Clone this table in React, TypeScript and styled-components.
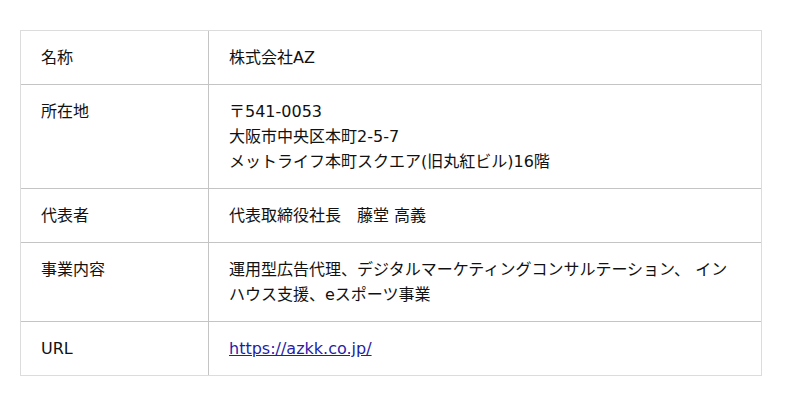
import React from "react";
import styled, { createGlobalStyle } from "styled-components";

const Global = createGlobalStyle`
  html, body { margin: 0; padding: 0; background: #fff; }
  body {
    font-family: "DejaVu Sans", "Noto Sans CJK JP", sans-serif;
    color: #111;
  }
`;

const Page = styled.div`
  padding: 30px 0 0 20px;
`;

const Table = styled.div`
  width: 742px;
  box-sizing: border-box;
  border: 1px solid #dcdcdc;
  display: flex;
  flex-direction: column;
`;

const Row = styled.div`
  display: grid;
  grid-template-columns: 188px 1fr;
  & + & {
    border-top: 1px solid #c4c4c4;
  }
`;

const Label = styled.div`
  padding: 14px 20px;
  font-size: 16px;
  line-height: 25px;
  border-right: 1px solid #c4c4c4;
`;

const Value = styled.div`
  padding: 14px 20px;
  font-size: 16px;
  line-height: 25px;
`;

const Link = styled.a`
  color: #1f1ea6;
  text-decoration: underline;
`;

const rows: { label: string; value: React.ReactNode }[] = [
  { label: "名称", value: "株式会社AZ" },
  {
    label: "所在地",
    value: (
      <>
        〒541-0053
        <br />
        大阪市中央区本町2-5-7
        <br />
        メットライフ本町スクエア(旧丸紅ビル)16階
      </>
    ),
  },
  { label: "代表者", value: "代表取締役社長\u3000藤堂 高義" },
  {
    label: "事業内容",
    value: "運用型広告代理、デジタルマーケティングコンサルテーション、 インハウス支援、eスポーツ事業",
  },
  {
    label: "URL",
    value: <Link href="https://azkk.co.jp/">https://azkk.co.jp/</Link>,
  },
];

export default function App() {
  return (
    <>
      <Global />
      <Page>
        <Table>
          {rows.map((r) => (
            <Row key={r.label}>
              <Label>{r.label}</Label>
              <Value>{r.value}</Value>
            </Row>
          ))}
        </Table>
      </Page>
    </>
  );
}
